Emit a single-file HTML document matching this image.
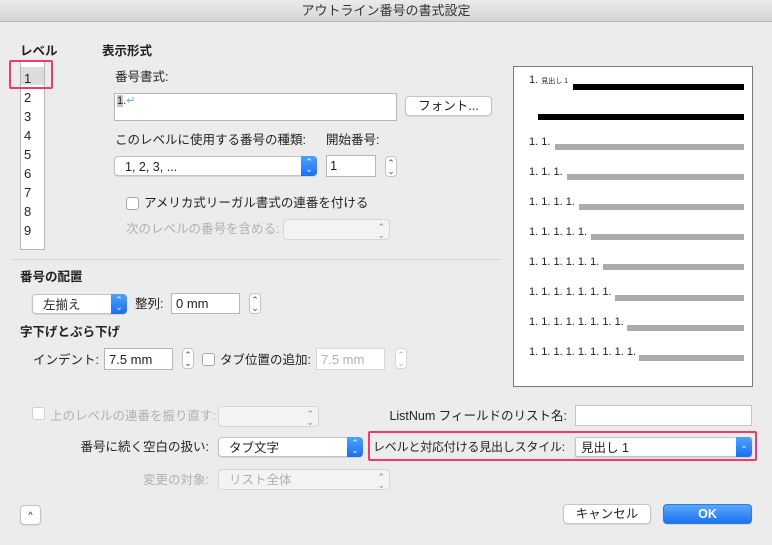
<!DOCTYPE html>
<html><head><meta charset="utf-8"><style>
*{margin:0;padding:0;box-sizing:border-box}
body{width:772px;height:545px;background:#ececec;font-family:"Liberation Sans","Noto Sans CJK JP",sans-serif;font-size:12.5px;color:#222;position:relative;overflow:hidden}
.a{position:absolute;white-space:nowrap;line-height:16px}
.b{font-weight:bold}
.g{color:#b0b0b0}
.box{position:absolute;background:#fff;border:1px solid #b5b5b5}
.pop{position:absolute;background:#fff;border:1px solid #c4c4c4;border-radius:4px;box-shadow:0 0.5px 1px rgba(0,0,0,.2)}
.pop span{position:absolute;left:10px;top:2px;line-height:16px}
.blue{position:absolute;right:-1px;top:-1px;bottom:-1px;width:16px;background:linear-gradient(#4da1fb,#1a6ff0);border-radius:0 4px 4px 0;color:#fff;font-size:9px;line-height:7px;text-align:center;padding-top:3px}
.dis{background:#f3f3f3;border-color:#d6d6d6;box-shadow:none}
.st{position:absolute;width:12px;height:21px;background:#fff;border:1px solid #c4c4c4;border-radius:4px;font-size:9px;line-height:8px;text-align:center;padding-top:2px;color:#444}
.cb{position:absolute;width:13px;height:13px;background:#fff;border:1px solid #a8a8a8;border-radius:3px}
.btn{position:absolute;background:#fff;border:1px solid #c4c4c4;border-radius:4px;text-align:center;line-height:18px;box-shadow:0 0.5px 1px rgba(0,0,0,.15)}
.bar{position:absolute;height:6px}
.pv{position:absolute;font-size:11px;line-height:12px;color:#222}
</style></head><body>
<div style="position:absolute;left:0;top:0;width:772px;height:22px;background:linear-gradient(#ebebeb,#d5d5d5);border-bottom:1px solid #b8b8b8;text-align:center;line-height:22px;font-size:13px;color:#333">アウトライン番号の書式設定</div>

<div class="a b" style="left:20px;top:43px">レベル</div>
<div class="box" style="left:20px;top:60px;width:25px;height:190px"></div>
<div style="position:absolute;left:21px;top:67px;width:23px;height:18px;background:#dcdcdc"></div>
<div class="a" style="left:24px;top:71px;font-size:13px">1</div>
<div class="a" style="left:24px;top:90px;font-size:13px">2</div>
<div class="a" style="left:24px;top:109px;font-size:13px">3</div>
<div class="a" style="left:24px;top:128px;font-size:13px">4</div>
<div class="a" style="left:24px;top:147px;font-size:13px">5</div>
<div class="a" style="left:24px;top:166px;font-size:13px">6</div>
<div class="a" style="left:24px;top:185px;font-size:13px">7</div>
<div class="a" style="left:24px;top:204px;font-size:13px">8</div>
<div class="a" style="left:24px;top:223px;font-size:13px">9</div>
<div style="position:absolute;left:9px;top:60px;width:44px;height:29px;border:2px solid #f0396f;border-radius:2px"></div>

<div class="a b" style="left:102px;top:43px">表示形式</div>
<div class="a" style="left:115px;top:69px">番号書式:</div>
<div class="box" style="left:114px;top:93px;width:283px;height:28px"></div>
<div class="a" style="left:117px;top:93px;font-size:11px"><span style="background:#c8c8c8">1</span>.<span style="color:#6aa6e8">↵</span></div>
<div class="btn" style="left:405px;top:96px;width:87px;height:20px">フォント...</div>

<div class="a" style="left:115px;top:132px">このレベルに使用する番号の種類:</div>
<div class="a" style="left:326px;top:132px">開始番号:</div>
<div class="pop" style="left:114px;top:156px;width:203px;height:20px"><span>1, 2, 3, ...</span><div class="blue">⌃<br>⌄</div></div>
<div class="box" style="left:326px;top:155px;width:50px;height:22px"></div>
<div class="a" style="left:330px;top:158px;font-size:13px">1</div>
<div class="st" style="left:385px;top:156px">⌃<br>⌄</div>

<div class="cb" style="left:126px;top:197px"></div>
<div class="a" style="left:144px;top:195px">アメリカ式リーガル書式の連番を付ける</div>
<div class="a g" style="left:126px;top:221px">次のレベルの番号を含める:</div>
<div class="pop dis" style="left:283px;top:219px;width:107px;height:21px"><span style="left:auto;right:4px;font-size:9px;line-height:8px;top:3px;color:#888">⌃<br>⌄</span></div>

<div style="position:absolute;left:12px;top:259px;width:489px;height:1px;background:#d4d4d4"></div>

<div class="a b" style="left:20px;top:269px">番号の配置</div>
<div class="pop" style="left:32px;top:294px;width:95px;height:20px"><span>左揃え</span><div class="blue">⌃<br>⌄</div></div>
<div class="a" style="left:135px;top:296px">整列:</div>
<div class="box" style="left:171px;top:293px;width:69px;height:21px"></div>
<div class="a" style="left:176px;top:296px;font-size:13px">0 mm</div>
<div class="st" style="left:249px;top:293px">⌃<br>⌄</div>

<div class="a b" style="left:20px;top:324px">字下げとぶら下げ</div>
<div class="a" style="left:33px;top:352px">インデント:</div>
<div class="box" style="left:104px;top:348px;width:69px;height:22px"></div>
<div class="a" style="left:109px;top:352px;font-size:13px">7.5 mm</div>
<div class="st" style="left:182px;top:348px">⌃<br>⌄</div>
<div class="cb" style="left:202px;top:353px"></div>
<div class="a" style="left:220px;top:352px">タブ位置の追加:</div>
<div class="box" style="left:316px;top:348px;width:69px;height:22px;border-color:#d6d6d6"></div>
<div class="a g" style="left:321px;top:352px;font-size:13px">7.5 mm</div>
<div class="st" style="left:395px;top:348px;color:#aaa;border-color:#d6d6d6">⌃<br>⌄</div>

<div class="box" style="left:513px;top:66px;width:240px;height:321px;border-color:#7a7a7a"></div>
<div class="pv" style="left:529px;top:74px">1. <span style="font-size:7px">見出し 1</span></div>
<div class="bar" style="left:573px;top:84px;width:171px;background:#000"></div>
<div class="bar" style="left:538px;top:114px;width:206px;background:#000"></div>
<div class="pv" style="left:529px;top:136px">1. 1.</div><div class="bar" style="left:555px;top:144px;width:189px;background:#ababab"></div>
<div class="pv" style="left:529px;top:166px">1. 1. 1.</div><div class="bar" style="left:567px;top:174px;width:177px;background:#ababab"></div>
<div class="pv" style="left:529px;top:196px">1. 1. 1. 1.</div><div class="bar" style="left:579px;top:204px;width:165px;background:#ababab"></div>
<div class="pv" style="left:529px;top:226px">1. 1. 1. 1. 1.</div><div class="bar" style="left:591px;top:234px;width:153px;background:#ababab"></div>
<div class="pv" style="left:529px;top:256px">1. 1. 1. 1. 1. 1.</div><div class="bar" style="left:603px;top:264px;width:141px;background:#ababab"></div>
<div class="pv" style="left:529px;top:286px">1. 1. 1. 1. 1. 1. 1.</div><div class="bar" style="left:615px;top:295px;width:129px;background:#ababab"></div>
<div class="pv" style="left:529px;top:316px">1. 1. 1. 1. 1. 1. 1. 1.</div><div class="bar" style="left:627px;top:325px;width:117px;background:#ababab"></div>
<div class="pv" style="left:529px;top:346px">1. 1. 1. 1. 1. 1. 1. 1. 1.</div><div class="bar" style="left:639px;top:355px;width:105px;background:#ababab"></div>

<div class="cb" style="left:32px;top:407px;border-color:#d0d0d0"></div>
<div class="a g" style="left:50px;top:408px">上のレベルの連番を振り直す:</div>
<div class="pop dis" style="left:218px;top:406px;width:101px;height:21px"><span style="left:auto;right:4px;font-size:9px;line-height:8px;top:3px;color:#888">⌃<br>⌄</span></div>
<div class="a" style="right:205px;top:408px">ListNum フィールドのリスト名:</div>
<div class="box" style="left:575px;top:405px;width:177px;height:21px;border-color:#c4c4c4"></div>

<div class="a" style="right:563px;top:439px">番号に続く空白の扱い:</div>
<div class="pop" style="left:218px;top:437px;width:145px;height:20px"><span>タブ文字</span><div class="blue">⌃<br>⌄</div></div>
<div style="position:absolute;left:368px;top:431px;width:389px;height:30px;border:2px solid #f0396f;border-radius:2px"></div>
<div class="a" style="left:373px;top:439px;font-size:12px;letter-spacing:-0.2px">レベルと対応付ける見出しスタイル:</div>
<div class="pop" style="left:575px;top:437px;width:177px;height:20px;border-radius:2px"><span style="left:5px">見出し 1</span><div class="blue" style="padding-top:5px">⌄</div></div>

<div class="a g" style="right:563px;top:472px">変更の対象:</div>
<div class="pop dis" style="left:218px;top:469px;width:172px;height:21px"><span class="g" style="color:#b0b0b0">リスト全体</span><span style="left:auto;right:4px;font-size:9px;line-height:8px;top:3px;color:#888">⌃<br>⌄</span></div>

<div class="btn" style="left:20px;top:505px;width:21px;height:20px;font-size:9px;line-height:18px">^</div>
<div class="btn" style="left:563px;top:504px;width:88px;height:20px">キャンセル</div>
<div class="btn" style="left:663px;top:504px;width:89px;height:20px;background:linear-gradient(#5aa8fb,#1c72f1);border-color:#2a7af0;color:#fff;font-weight:bold">OK</div>
</body></html>
